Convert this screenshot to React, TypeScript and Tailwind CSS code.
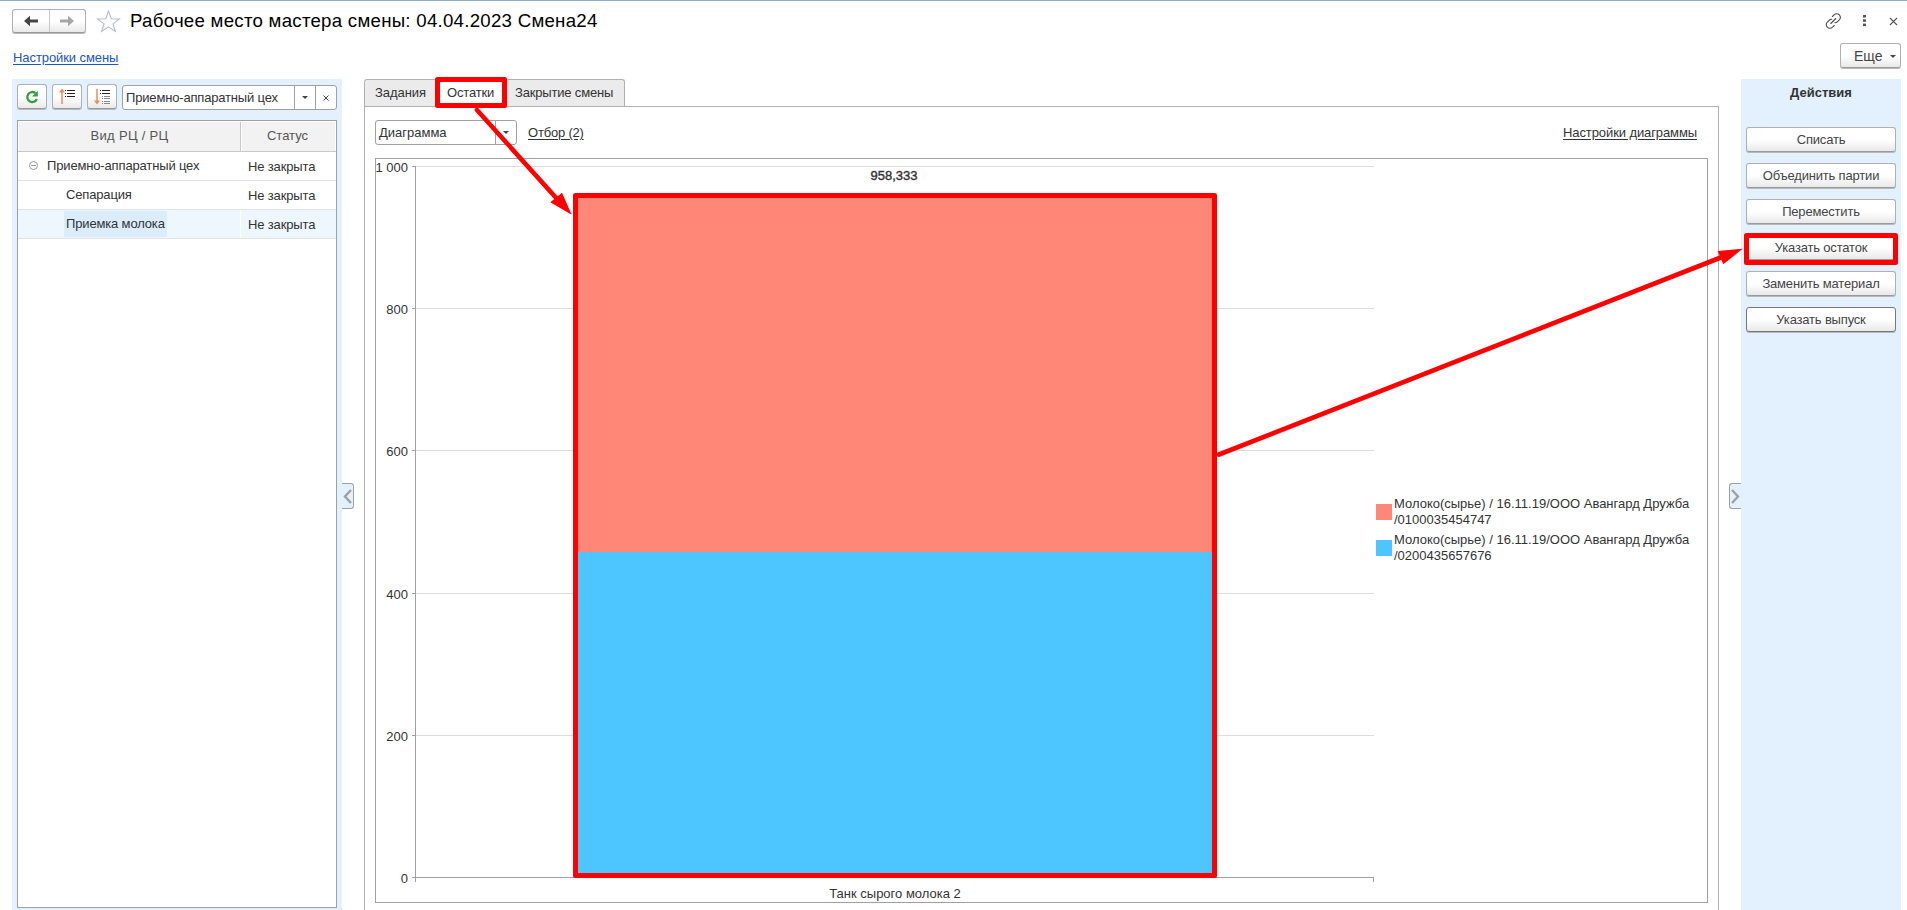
import type { ReactNode } from 'react';

const BTN = 'rounded-[3px] border bg-linear-to-b from-white from-50% to-[#e9e9e9] shadow-[0_1px_0_#b9b9b9] text-[#444444]';
const SOFT_EDGE = 'border-[#b0b0b0] border-b-[#9a9a9a]';
const DARK_EDGE = 'border-[#777777]';

function IconButton({ children }: { children: ReactNode }) {
  return (
    <button className={`flex h-[25px] w-[30px] items-center justify-center ${BTN} ${SOFT_EDGE}`}>
      {children}
    </button>
  );
}

function Caret() {
  return (
    <svg width="6" height="3" viewBox="0 0 6 3">
      <path d="M0 0H6L3 3Z" fill="#444" />
    </svg>
  );
}

function Header() {
  return (
    <header className="flex h-[34px] items-start border-t border-[#8fabc8] pl-3">
      <div className={`mt-2 flex h-6 w-[74px] ${BTN} ${SOFT_EDGE}`}>
        <div className="flex flex-1 items-center justify-center border-r border-[#c8c8c8]">
          <svg width="14" height="12" viewBox="0 0 14 12">
            <path d="M0 6 6 .8V4.6H14V7.4H6V11.2Z" fill="#444" />
          </svg>
        </div>
        <div className="flex flex-1 items-center justify-center">
          <svg width="14" height="12" viewBox="0 0 14 12">
            <path d="M14 6 8 .8V4.6H0V7.4H8V11.2Z" fill="#a6a6a6" />
          </svg>
        </div>
      </div>
      <svg className="mt-2 ml-[10px]" width="25" height="25" viewBox="0 0 25 25">
        <path d="M12.5 2 15.3 9.7 23.5 9.9 17 14.9 19.4 22.5 12.5 17.9 5.6 22.5 8 14.9 1.5 9.9 9.7 9.7Z" fill="none" stroke="#b4bcc6" strokeWidth="1.1" />
      </svg>
      <h1 className="mt-[6px] ml-[9px] text-[18.67px] leading-7 tracking-[0.26px] whitespace-nowrap text-black">
        Рабочее место мастера смены: 04.04.2023 Смена24
      </h1>
      <div className="mt-3 mr-[9px] ml-auto flex items-center gap-[18px]">
        <svg width="17" height="16" viewBox="0 0 17 16" fill="none" stroke="#4a4a4a" strokeWidth="1.1" strokeLinecap="round">
          <path d="M7.400 3.500 9 1.900C10.200.8 11.800.4 13.200 1.100 15.500 2.300 16 4.900 14.500 6.600L12.200 8.900C11.600 9.500 10.700 9.800 9.800 9.700" />
          <path d="M9.200 12.500 7.600 14.100C6.400 15.200 4.800 15.600 3.400 14.900 1.100 13.700.6 11.100 2.100 9.400L4.400 7.100C5 6.500 5.900 6.200 6.800 6.300" />
          <path d="M5.800 10.500 10.800 5.500" />
        </svg>
        <svg className="-mt-px ml-[3px]" width="3" height="12" viewBox="0 0 3 12" fill="#555">
          <rect y="0" width="3" height="2.500" />
          <rect y="4.300" width="3" height="2.500" />
          <rect y="8.600" width="3" height="2.500" />
        </svg>
        <svg className="ml-[5px]" width="9" height="9" viewBox="0 0 9 9">
          <path d="M1 1 8 8M8 1 1 8" stroke="#555" strokeWidth="1.100" />
        </svg>
      </div>
    </header>
  );
}

const rows = [
  { name: 'Приемно-аппаратный цех', level: 0, selected: false },
  { name: 'Сепарация', level: 1, selected: false },
  { name: 'Приемка молока', level: 1, selected: true },
];

function WorkCenters() {
  return (
    <aside className="flex w-[330px] flex-col bg-[#e3f0fd] px-[5px] pt-[5px] pb-[2px]">
      <div className="flex h-[26px] items-start gap-[5px]">
        <IconButton>
          <svg width="14" height="14" viewBox="0 0 14 14" fill="none">
            <path d="M11.900 9A5 5 0 1 1 10.400 3.100" stroke="#2fa03a" strokeWidth="2.300" />
            <path d="M12.800.8V6.400H7.200Z" fill="#2fa03a" />
          </svg>
        </IconButton>
        <IconButton>
          <svg width="17" height="17" viewBox="0 0 17 17">
            <path d="M3 16V2" stroke="#f08a5d" strokeWidth="1.500" />
            <path d="M0 4.500 3 .5 6 4.500Z" fill="#f08a5d" />
            <path d="M6 2.500h1M8 2.500h8M6 5.500h1M8 5.500h8M6 8.500h1M8 8.500h8" stroke="#222" />
          </svg>
        </IconButton>
        <IconButton>
          <svg width="17" height="17" viewBox="0 0 17 17">
            <path d="M3 1V15" stroke="#f08a5d" strokeWidth="1.500" />
            <path d="M0 12.500 3 16.500 6 12.500Z" fill="#f08a5d" />
            <path d="M6 2.500h1M8 2.500h8M6 5.500h1M8 5.500h8" stroke="#222" />
            <path d="M8 8.500h1M10 8.500h6M8 10.500h1M10 10.500h6M8 13.500h1M10 13.500h6M8 15.500h1M10 15.500h6" stroke="#888" />
          </svg>
        </IconButton>
        <div className="mt-px flex h-[25px] w-[215px] rounded-[3px] border border-[#a0a0a0] bg-white">
          <span className="flex-1 pl-[3px] leading-[23px] tracking-[-0.17px] whitespace-nowrap text-[#333]">Приемно-аппаратный цех</span>
          <span className="flex w-[21px] items-center justify-center border-l border-[#a0a0a0]"><Caret /></span>
          <span className="flex w-[21px] items-center justify-center border-l border-[#a0a0a0]">
            <svg width="6" height="6" viewBox="0 0 6 6"><path d="M.5.5 5.500 5.500M5.500.5.5 5.500" stroke="#444" /></svg>
          </span>
        </div>
      </div>
      <div className="mt-[10px] flex-1 border border-[#a0a0a0] bg-white">
        <div className="flex h-[31px] border-b border-[#c8c8c8] pt-px pr-px pl-px text-center leading-[28px] text-[#555]">
          <div className="w-[222px] border-r border-[#c8c8c8] bg-[#f2f2f2] tracking-[0.3px]">Вид РЦ / РЦ</div>
          <div className="ml-px flex-1 bg-[#f2f2f2] pr-[2px]">Статус</div>
        </div>
        {rows.map((row) => (
          <div key={row.name} className="flex h-[29px] border-b border-[#e2e2e2] text-[#333]">
            <div className={`flex w-[222px] items-center py-px ${row.selected ? 'bg-[#eef6fe]' : ''} ${row.level === 0 ? 'pl-[11px]' : 'pl-[46px]'}`}>
              {row.level === 0 && (
                <svg className="mr-[7px] -mt-px" width="9" height="9" viewBox="0 0 9 9" fill="none" stroke="#999">
                  <circle cx="4.500" cy="4.500" r="4" />
                  <path d="M2 4.500H7" />
                </svg>
              )}
              <span className={`px-[2px] leading-[26px] tracking-[-0.15px] whitespace-nowrap ${row.selected ? 'bg-[#dbedfd]' : ''}`}>{row.name}</span>
            </div>
            <div className={`ml-px flex-1 pl-[7px] leading-[29px] tracking-[-0.15px] whitespace-nowrap ${row.selected ? 'bg-[#eef6fe]' : ''}`}>Не закрыта</div>
          </div>
        ))}
      </div>
    </aside>
  );
}

const ticks = [
  { label: '1 000', y: 7.5 },
  { label: '800', y: 149.5 },
  { label: '600', y: 291.5 },
  { label: '400', y: 434.5 },
  { label: '200', y: 576.5 },
  { label: '0', y: 718.5 },
];

function Chart() {
  return (
    <svg className="block" width="999" height="742" viewBox="0 0 999 742" fontSize="13" fill="#333">
      {ticks.map((t) => (
        <g key={t.label}>
          <text x="32" y={t.y + 5} textAnchor="end">{t.label}</text>
          <path d={`M40 ${t.y}H998`} stroke={t.label === '0' ? '#a0a0a0' : '#dcdcdc'} />
          <path d={`M36 ${t.y}H40`} stroke="#a0a0a0" />
        </g>
      ))}
      <path d="M39.500 7V723M997.500 718V723" stroke="#a0a0a0" />
      <rect x="198" y="36" width="641" height="357" fill="#ff8778" />
      <rect x="198" y="393" width="641" height="325" fill="#4dc6ff" />
      <text x="518" y="21" textAnchor="middle" stroke="#333" strokeWidth=".4">958,333</text>
      <text x="519" y="739" textAnchor="middle">Танк сырого молока 2</text>
    </svg>
  );
}

const legend = [
  { color: 'bg-[#ff8778]', code: '/0100035454747' },
  { color: 'bg-[#4dc6ff]', code: '/0200435657676' },
];

function Tabs() {
  return (
    <main className="ml-[10px] flex w-[1355px] flex-col">
      <div className="flex h-[27px] w-[261px] overflow-hidden rounded-t-[3px] border border-b-0 border-[#b0b0b0] bg-[#ebebeb] leading-[26px] whitespace-nowrap text-[#333]">
        <div className="w-[72px] pl-[10px] tracking-[-0.05px]">Задания</div>
        <div className="w-[68px] bg-white pl-[10px] tracking-[-0.15px]">Остатки</div>
        <div className="pl-[10px] tracking-[-0.17px]">Закрытие смены</div>
      </div>
      <div className="flex-1 border-x border-t border-[#b0b0b0] pt-[13px] pl-[10px]">
        <div className="flex h-[25px] items-center">
          <div className="flex h-[25px] w-[142px] rounded-[3px] border border-[#a0a0a0]">
            <span className="flex-1 pl-[3px] leading-[23px] text-[#333]">Диаграмма</span>
            <span className="flex w-[21px] items-center justify-center border-l border-[#a0a0a0]"><Caret /></span>
          </div>
          <a className="ml-[11px] tracking-[-0.2px] text-[#333] underline underline-offset-2">Отбор (2)</a>
          <a className="mr-[21px] ml-auto tracking-[-0.1px] text-[#333] underline underline-offset-2">Настройки диаграммы</a>
        </div>
        <div className="mt-[13px] flex h-[745px] w-[1333px] border border-[#a0a0a0]">
          <Chart />
          <div className="mt-[337px] ml-[1px] flex flex-col gap-1 text-[#333]">
            {legend.map((item) => (
              <div key={item.code} className="flex items-start gap-[2px]">
                <span className={`mt-[8px] size-4 ${item.color}`} />
                <span className="leading-4 whitespace-nowrap">
                  Молоко(сырье) / 16.11.19/ООО Авангард Дружба
                  <br />
                  {item.code}
                </span>
              </div>
            ))}
          </div>
        </div>
      </div>
    </main>
  );
}

const actions = ['Списать', 'Объединить партии', 'Переместить', 'Указать остаток', 'Заменить материал', 'Указать выпуск'];

function Actions() {
  return (
    <aside className="flex w-[160px] flex-col items-center bg-[#e3f0fd]">
      <h2 className="mt-[5px] leading-[18px] font-bold text-[#333]">Действия</h2>
      <div className="mt-[25px] flex flex-col gap-[11px]">
        {actions.map((a, i) => (
          <button key={a} className={`h-[25px] w-[150px] pt-px tracking-[-0.18px] ${BTN} ${i === actions.length - 1 ? DARK_EDGE : SOFT_EDGE}`}>
            {a}
          </button>
        ))}
      </div>
    </aside>
  );
}

function Annotations() {
  return (
    <svg className="pointer-events-none absolute inset-0" width="1907" height="910" viewBox="0 0 1907 910" fill="none" stroke="#f00" strokeWidth="5" strokeLinejoin="round" strokeLinecap="round">
      <rect x="437.500" y="79.500" width="67" height="26" />
      <rect x="575.500" y="195.500" width="639" height="680" />
      <rect x="1746.500" y="235.500" width="149" height="27" />
      <path d="M477 110 558 200M1219 454.500 1722 257" strokeWidth="4.600" />
      <path d="M571.700 214.700 562 192.700 550.300 202.300ZM1742.700 248.700 1717.700 251 1723.300 264.300Z" fill="#f00" stroke="none" />
    </svg>
  );
}

export default function App() {
  return (
    <div className="relative flex h-[910px] w-[1907px] flex-col overflow-hidden bg-white font-['Liberation_Sans',Arial,sans-serif] text-[13px]">
      <Header />
      <div className="flex h-[45px] items-start justify-between pr-[6px] pl-[13px]">
        <a className="mt-[15px] leading-[18px] tracking-[-0.08px] text-[#2255b5] underline underline-offset-2">Настройки смены</a>
        <button className={`mt-[9px] flex h-[25px] w-[61px] items-center gap-[7px] pt-px pl-[13px] text-[14px] ${BTN} ${SOFT_EDGE}`}>
          Еще <Caret />
        </button>
      </div>
      <div className="flex min-h-0 flex-1 pl-3">
        <WorkCenters />
        <div className="mt-[404px] flex h-[26px] w-3 items-center justify-center rounded-r-[3px] border border-l-0 border-[#a0a0a0] bg-[#e3f0fd]">
          <svg width="9" height="15" viewBox="0 0 9 15"><path d="M8 1 2 7.500 8 14" fill="none" stroke="#a0a0a0" strokeWidth="2.400" /></svg>
        </div>
        <Tabs />
        <div className="mt-[404px] ml-[10px] flex h-[26px] w-3 items-center justify-center rounded-l-[3px] border border-r-0 border-[#a0a0a0] bg-[#e3f0fd]">
          <svg width="9" height="15" viewBox="0 0 9 15"><path d="M1 1 7 7.500 1 14" fill="none" stroke="#a0a0a0" strokeWidth="2.400" /></svg>
        </div>
        <Actions />
      </div>
      <Annotations />
    </div>
  );
}
